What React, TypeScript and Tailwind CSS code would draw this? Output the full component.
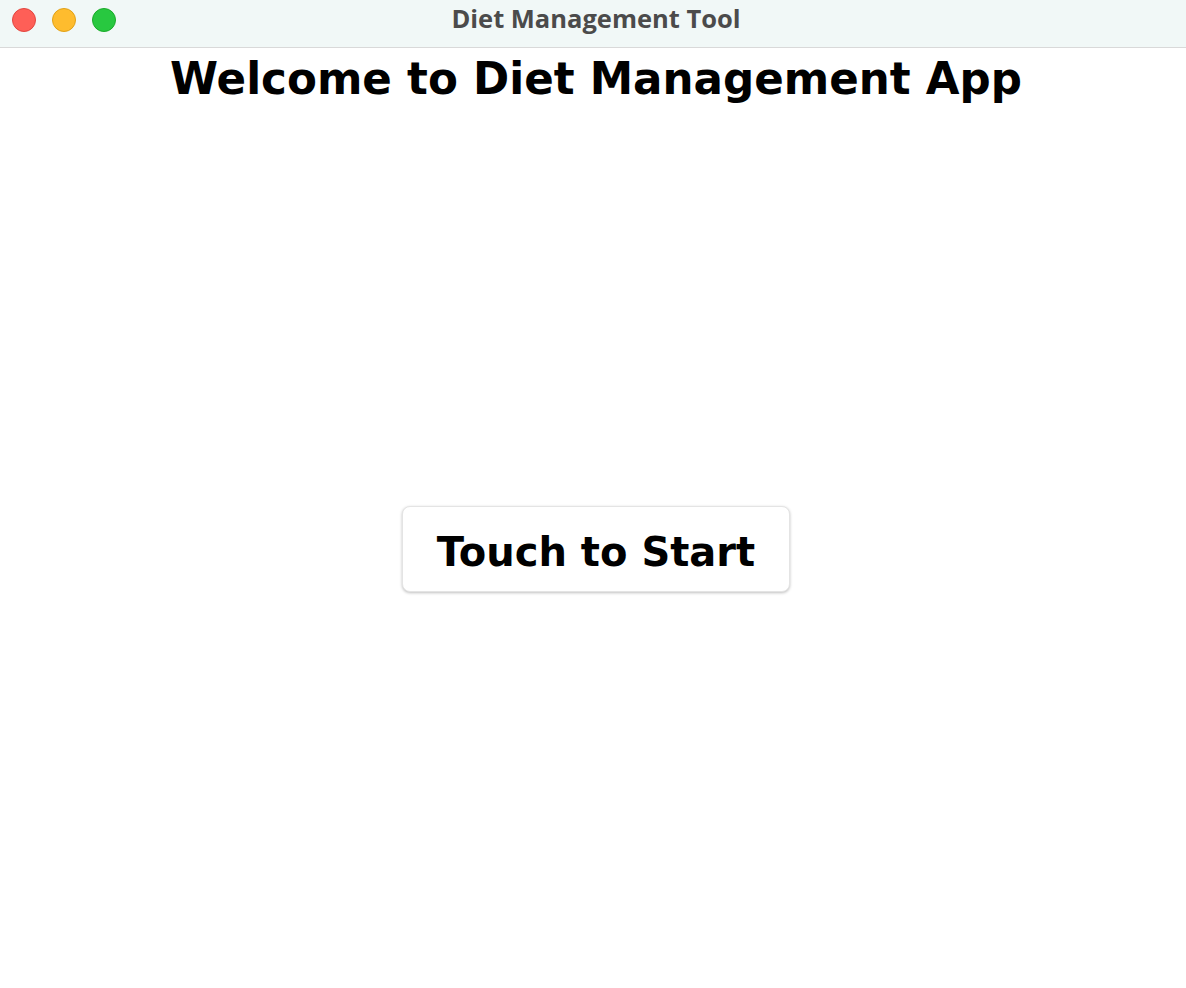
export default function App() {
  return (
    <div className="flex flex-col h-[988px] w-full bg-white font-['DejaVu_Sans',sans-serif] overflow-hidden">
      <div className="relative flex items-center justify-center h-[48px] shrink-0 bg-[#f1f8f7] border-b border-[#d9d9d9]">
        <div className="absolute left-[12px] top-[8px] flex gap-[16px]">
          <span className="w-[24px] h-[24px] rounded-full bg-[#fe5f57] border border-[#e2463f]" />
          <span className="w-[24px] h-[24px] rounded-full bg-[#febc2e] border border-[#e1a116]" />
          <span className="w-[24px] h-[24px] rounded-full bg-[#28c840] border border-[#1aab29]" />
        </div>
        <span className="pl-[6px] text-[25.5px] font-bold text-[#4b4b4b] font-['Open_Sans',sans-serif] -mt-[10px]">
          Diet Management Tool
        </span>
      </div>

      <h1 className="pl-[6px] text-center text-[43.6px] leading-[62px] font-bold text-black">
        Welcome to Diet Management App
      </h1>

      <div className="flex flex-1 items-center justify-center pl-[6px]">
        <button className="w-[388px] h-[86px] pt-[5px] rounded-[8px] bg-white border border-[#e4e4e4] shadow-[0_1px_3px_rgba(0,0,0,0.25)] text-[40px] font-bold text-black">
          Touch to Start
        </button>
      </div>
    </div>
  );
}
